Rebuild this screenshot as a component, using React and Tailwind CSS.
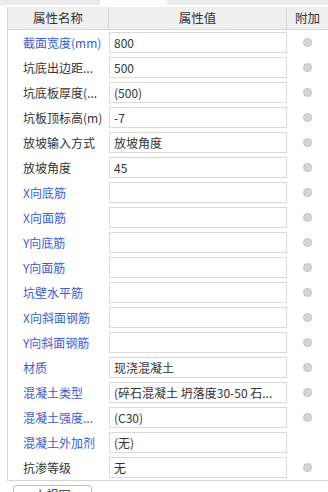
import React from "react";

const rows = [
  { label: "截面宽度(mm)", value: "800", blue: true, radio: true },
  { label: "坑底出边距...", value: "500", blue: false, radio: true },
  { label: "坑底板厚度(...", value: "(500)", blue: false, radio: true },
  { label: "坑板顶标高(m)", value: "-7", blue: false, radio: true },
  { label: "放坡输入方式", value: "放坡角度", blue: false, radio: true },
  { label: "放坡角度", value: "45", blue: false, radio: true },
  { label: "X向底筋", value: "", blue: true, radio: true },
  { label: "X向面筋", value: "", blue: true, radio: true },
  { label: "Y向底筋", value: "", blue: true, radio: true },
  { label: "Y向面筋", value: "", blue: true, radio: true },
  { label: "坑壁水平筋", value: "", blue: true, radio: true },
  { label: "X向斜面钢筋", value: "", blue: true, radio: true },
  { label: "Y向斜面钢筋", value: "", blue: true, radio: true },
  { label: "材质", value: "现浇混凝土", blue: true, radio: true },
  { label: "混凝土类型", value: "(碎石混凝土 坍落度30-50 石...", blue: true, radio: true },
  { label: "混凝土强度...", value: "(C30)", blue: true, radio: true },
  { label: "混凝土外加剂", value: "(无)", blue: true, radio: false },
  { label: "抗渗等级", value: "无", blue: false, radio: true },
];

export default function App() {
  return (
    <div
      className="w-[328px] h-[492px] overflow-hidden bg-white text-[12px] text-[#333]"
      style={{ fontFamily: '"Noto Sans CJK SC", "Noto Sans", sans-serif' }}
    >
      {/* tab strip */}
      <div className="flex h-[5px]">
        <div className="w-[100px] bg-[#ececec]" />
        <div className="w-[67px] bg-white" />
        <div className="flex-1 bg-[#ececec]" />
      </div>

      <div className="mt-[2px] ml-[7px] border-l border-b border-[#d6d6d6]">
        {/* header */}
        <div className="flex h-[23px] bg-[#efefef] border-b border-[#d6d6d6] text-[12.5px]">
          <div className="w-[101px] flex items-center justify-center border-r border-[#d6d6d6]">
            属性名称
          </div>
          <div className="w-[178px] flex items-center justify-center border-r border-[#d6d6d6]">
            属性值
          </div>
          <div className="flex-1 flex items-center justify-center">附加</div>
        </div>

        {/* rows */}
        {rows.map((row, i) => (
          <div key={i} className="flex h-[25px] items-center">
            <div
              className={
                "w-[101px] pl-[15px] whitespace-nowrap leading-none " +
                (row.blue ? "text-[#3a5bd9]" : "text-[#333]")
              }
            >
              {row.label}
            </div>
            <div className="w-[178px] h-[21px] border border-[#dadada] flex items-center pl-[4px] whitespace-nowrap overflow-hidden leading-none">
              {row.value}
            </div>
            <div className="flex-1 flex items-center justify-center">
              {row.radio && (
                <div className="w-[9px] h-[9px] rounded-full bg-[#d6d6d6] border border-[#c0c0c0]" />
              )}
            </div>
          </div>
        ))}
      </div>

      <div className="ml-[13px] mt-[4px] w-[79px] h-[20px] border border-[#bdbdbd] rounded-[3px] flex items-start justify-center pt-[3px] leading-none">
        上视图
      </div>
    </div>
  );
}
